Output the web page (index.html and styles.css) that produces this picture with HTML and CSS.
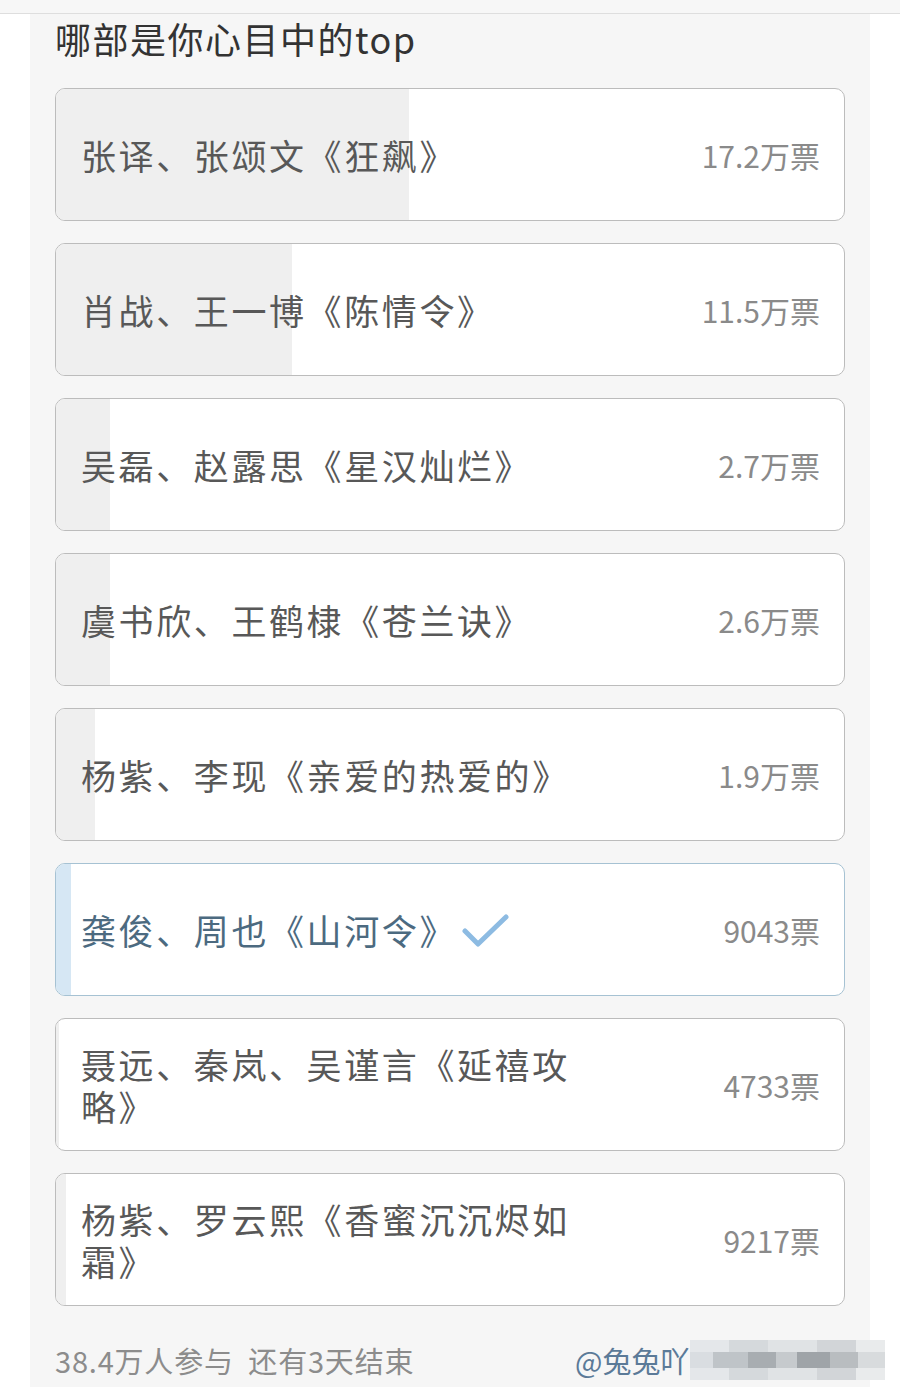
FILE: index.html
```html
<!DOCTYPE html>
<html lang="zh-CN">
<head>
    <meta charset="UTF-8">
    <meta name="viewport" content="width=device-width, initial-scale=1.0">
    <title>投票</title>
    <link rel="stylesheet" href="styles.css">
</head>
<body>

    <!-- top strip -->
    <div class="topbar"></div>

    <div class="panel">
        <h1 class="title">哪部是你心目中的top</h1>

        <ul class="options">
            <li class="option">
                <div class="fill" style="width: 44.8%"></div>
                <span class="name">张译、张颂文《狂飙》</span>
                <span class="votes">17.2万票</span>
            </li>
            <li class="option">
                <div class="fill" style="width: 29.9%"></div>
                <span class="name">肖战、王一博《陈情令》</span>
                <span class="votes">11.5万票</span>
            </li>
            <li class="option">
                <div class="fill" style="width: 6.8%"></div>
                <span class="name">吴磊、赵露思《星汉灿烂》</span>
                <span class="votes">2.7万票</span>
            </li>
            <li class="option">
                <div class="fill" style="width: 6.8%"></div>
                <span class="name">虞书欣、王鹤棣《苍兰诀》</span>
                <span class="votes">2.6万票</span>
            </li>
            <li class="option">
                <div class="fill" style="width: 4.9%"></div>
                <span class="name">杨紫、李现《亲爱的热爱的》</span>
                <span class="votes">1.9万票</span>
            </li>
            <li class="option selected">
                <div class="fill" style="width: 1.9%"></div>
                <span class="name">龚俊、周也《山河令》<svg class="check" width="48" height="36" viewBox="0 0 48 36"><path d="M4 18 L17 31 L45 4" fill="none" stroke="#8dbbe2" stroke-width="5" stroke-linecap="round" stroke-linejoin="round"/></svg></span>
                <span class="votes">9043票</span>
            </li>
            <li class="option">
                <div class="fill" style="width: 0.4%"></div>
                <span class="name">聂远、秦岚、吴谨言《延禧攻略》</span>
                <span class="votes">4733票</span>
            </li>
            <li class="option">
                <div class="fill" style="width: 1.3%"></div>
                <span class="name">杨紫、罗云熙《香蜜沉沉烬如霜》</span>
                <span class="votes">9217票</span>
            </li>
        </ul>

        <!-- Footer -->
        <div class="footer">
            <span class="stats">38.4万人参与&nbsp;&nbsp;还有3天结束</span>
            <span class="author">@兔兔吖</span>
            <div class="mosaic"></div>
        </div>
    </div>

</body>
</html>
```

FILE: styles.css
```css
body {
    margin: 0;
    padding: 0;
    background-color: #ffffff;
    font-family: "Noto Sans CJK SC", "Noto Sans", sans-serif;
    color: #555;
}

/* top strip */
.topbar {
    height: 13px;
    background-color: #f7f7f7;
    border-bottom: 1px solid #dedede;
}

.panel {
    margin: 0 30px;
    padding: 3px 25px 0;
    min-height: 1370px;
    background-color: #f6f6f6;
}

.title {
    margin: 0 0 28px;
    font-size: 36px;
    font-weight: normal;
    letter-spacing: 1.5px;
    line-height: 43px;
    color: #333;
}

/* Options */
.options {
    list-style: none;
    margin: 0;
    padding: 0;
    display: flex;
    flex-direction: column;
    gap: 22px;
}

.option {
    position: relative;
    overflow: hidden;
    box-sizing: border-box;
    height: 133px;
    display: flex;
    align-items: center;
    justify-content: space-between;
    padding: 0 24px 0 25px;
    background-color: #fff;
    border: 1.5px solid #bcbcbc;
    border-radius: 10px;
}

.fill {
    position: absolute;
    left: 0;
    top: 0;
    bottom: 0;
    background-color: #efefef;
}

.name {
    position: relative;
    max-width: 510px;
    font-size: 35px;
    letter-spacing: 2.6px;
    line-height: 42px;
    color: #585858;
}

.votes {
    position: relative;
    font-size: 30px;
    color: #8a8a8a;
}

.selected {
    border-color: #a6c2d3;
}

.selected .fill {
    background-color: #d6e7f4;
}

.selected .name {
    color: #4c6a80;
}

.check {
    margin-left: 4px;
    vertical-align: -4px;
}

/* Footer */
.footer {
    position: relative;
    display: grid;
    grid-template-columns: 520px auto;
    margin-top: 34px;
    font-size: 29px;
    letter-spacing: 0.8px;
    line-height: 40px;
}

.stats {
    color: #8c8c8c;
}

.author {
    letter-spacing: 0;
    color: #5b7a98;
}

.mosaic {
    position: absolute;
    left: 635px;
    top: 0;
    width: 195px;
    height: 40px;
    background:
        linear-gradient(90deg, #d9dde1 0 12%, #bfc4c8 12% 30%, #a8adb1 30% 44%, #c6cacd 44% 55%, #9fa4a8 55% 72%, #b9bdc0 72% 86%, #d8dbdd 86% 100%) 0 12px / 100% 16px no-repeat,
        linear-gradient(90deg, #e4e7ea 0 20%, #d5d9dc 20% 40%, #e0e3e5 40% 65%, #d2d5d8 65% 85%, #e9ebec 85% 100%);
}
```
